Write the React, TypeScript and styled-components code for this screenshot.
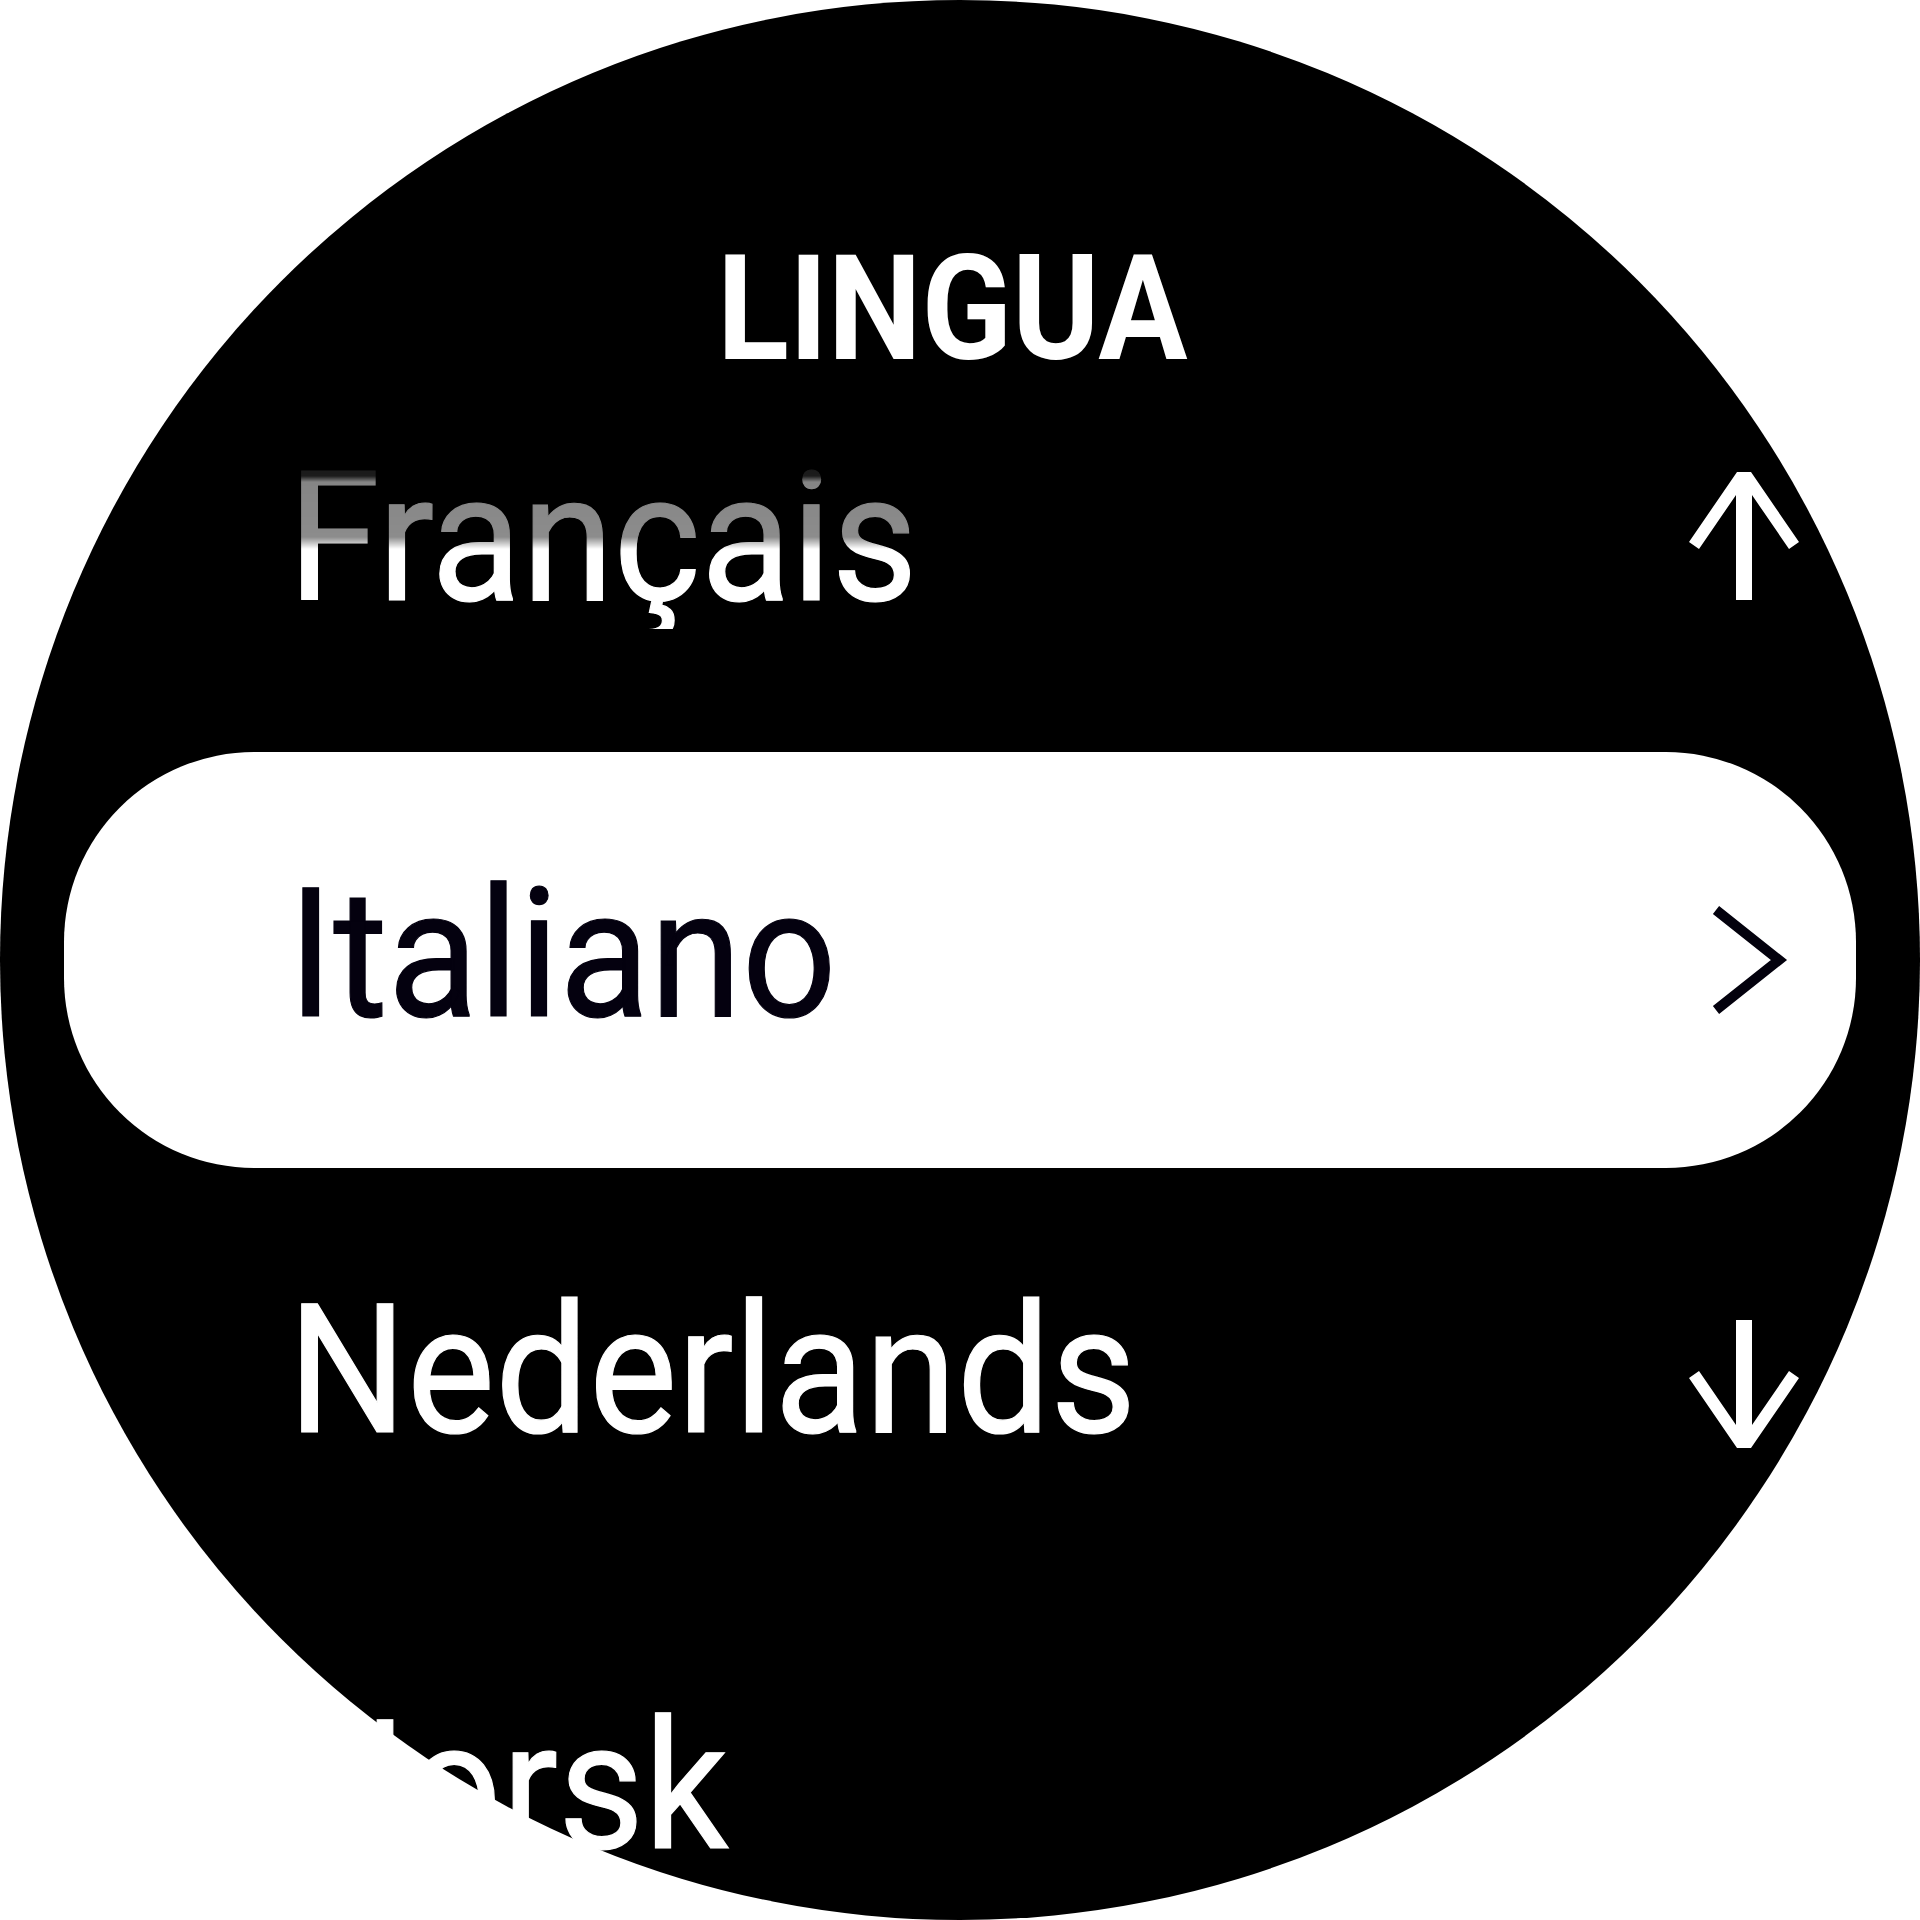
import styled, { createGlobalStyle } from "styled-components";

const GlobalStyle = createGlobalStyle`
  html, body {
    margin: 0;
    padding: 0;
    background: #ffffff;
    overflow: hidden;
  }
  #root {
    width: 1920px;
    height: 1920px;
  }
`;

type Lang = { name: string; selected?: boolean; fade?: boolean; icon?: "up" | "down" | "next" };

const languages: Lang[] = [
  { name: "Français", fade: true, icon: "up" },
  { name: "Italiano", selected: true, icon: "next" },
  { name: "Nederlands", icon: "down" },
  { name: "Norsk" },
];

// arrows drawn as one filled outline so the head and the stem join cleanly
const UpArrow = () => (
  <svg width="112" height="128" viewBox="0 0 112 128">
    <polygon
      fill="#fff"
      points="49,0 1,70 11,77 48,23 48,128 64,128 64,23 101,77 111,70 63,0"
    />
  </svg>
);

const DownArrow = () => (
  <svg width="112" height="128" viewBox="0 0 112 128">
    <polygon
      fill="#fff"
      points="49,128 1,58 11,51 48,105 48,0 64,0 64,105 101,51 111,58 63,128"
    />
  </svg>
);

const NextChevron = () => (
  <svg width="112" height="128" viewBox="0 0 112 128">
    <polyline points="28,14 91,64 28,114" fill="none" stroke="#03010d" strokeWidth="10" strokeLinejoin="miter" />
  </svg>
);

const App = () => {
  return (
    <>
      <GlobalStyle />
      <Watch>
        <Title>LINGUA</Title>
        <List>
          {languages.map((lang) => (
            <Row key={lang.name} $selected={lang.selected}>
              <Label $selected={lang.selected} $fade={lang.fade}>
                {lang.name}
              </Label>
              <IconSlot $offset={lang.icon === "up" ? -8 : lang.icon === "down" ? 8 : 0}>
                {lang.icon === "up" && <UpArrow />}
                {lang.icon === "down" && <DownArrow />}
                {lang.icon === "next" && <NextChevron />}
              </IconSlot>
            </Row>
          ))}
        </List>
      </Watch>
    </>
  );
};

const Watch = styled.div`
  width: 1920px;
  height: 1920px;
  border-radius: 50%;
  background: #000000;
  display: flex;
  flex-direction: column;
  align-items: center;
  padding-top: 237px;
  box-sizing: border-box;
  font-family: Roboto, "Liberation Sans", sans-serif;
`;

const Title = styled.h1`
  margin: 0 0 -47px;
  padding-right: 18px;
  flex-shrink: 0;
  font-size: 146px;
  font-weight: 700;
  line-height: 1;
  color: #ffffff;
  transform: scaleX(0.91);
  position: relative;
  z-index: 1;
`;

const List = styled.div`
  display: flex;
  flex-direction: column;
  flex-shrink: 0;
`;

const Row = styled.div<{ $selected?: boolean }>`
  width: 1792px;
  height: 416px;
  flex-shrink: 0;
  box-sizing: border-box;
  display: flex;
  align-items: center;
  justify-content: space-between;
  padding: 0 56px 0 224px;
  border-radius: 190px;
  background: ${(p) => (p.$selected ? "#ffffff" : "transparent")};
`;

const fadeMask =
  "linear-gradient(180deg, rgba(0,0,0,0.08) 0px, rgba(0,0,0,0.11) 27px, rgba(0,0,0,0.52) 33px, rgba(0,0,0,0.55) 88px, #000 100px)";

const Label = styled.span<{ $selected?: boolean; $fade?: boolean }>`
  font-size: 180px;
  font-weight: 400;
  line-height: 1;
  white-space: nowrap;
  transform: translateY(-5px) scaleX(0.925);
  transform-origin: left center;
  color: ${(p) => (p.$selected ? "#04010f" : "#ffffff")};
  -webkit-text-stroke: 1.2px ${(p) => (p.$selected ? "#04010f" : "#ffffff")};
  ${(p) =>
    p.$fade &&
    `
    -webkit-mask-image: ${fadeMask};
    mask-image: ${fadeMask};
  `}
`;

const IconSlot = styled.div<{ $offset: number }>`
  width: 112px;
  height: 128px;
  display: flex;
  align-items: center;
  justify-content: center;
  transform: translateY(${(p) => p.$offset}px);
`;

export default App;
